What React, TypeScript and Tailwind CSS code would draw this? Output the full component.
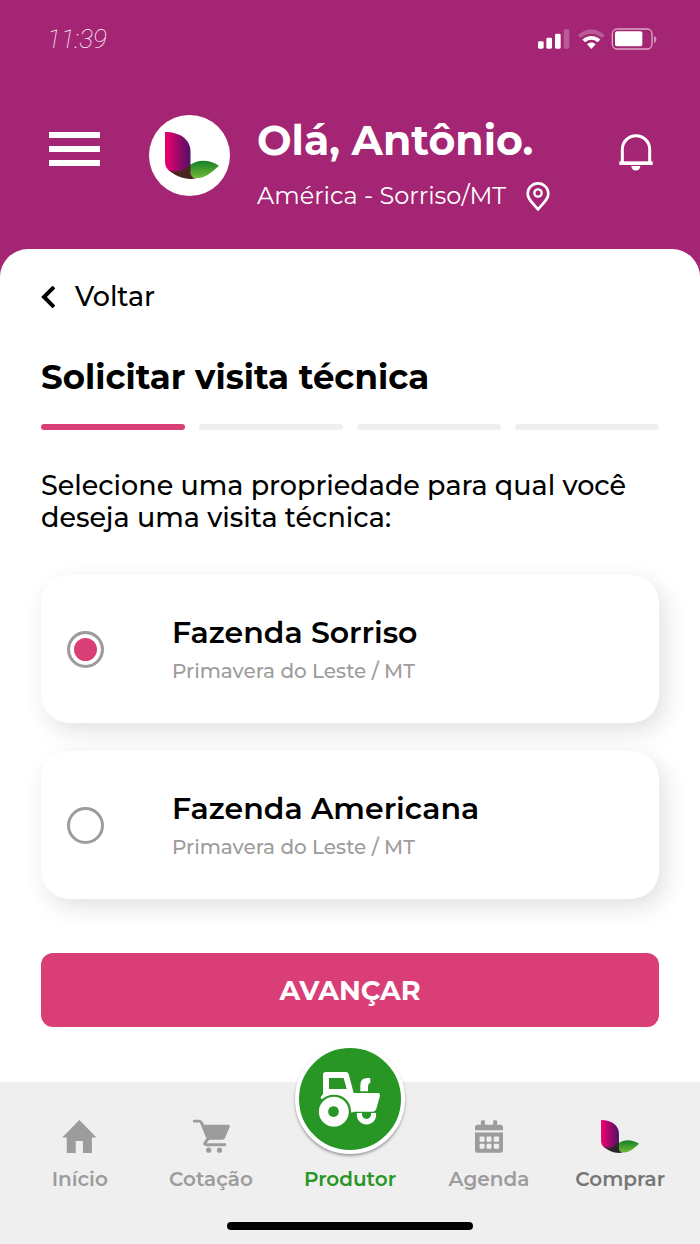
import React, { useState } from 'react';

type Farm = { id: string; name: string; place: string };

const FARMS: Farm[] = [
  { id: 'sorriso', name: 'Fazenda Sorriso', place: 'Primavera do Leste / MT' },
  { id: 'americana', name: 'Fazenda Americana', place: 'Primavera do Leste / MT' },
];

const STEPS = 4;

function StatusIcons() {
  return (
    <svg viewBox="37 38 360 66" className="h-[22px] w-[120px]" fill="white" aria-hidden="true">
      <rect x="40" y="78" width="17" height="22" rx="4" />
      <rect x="65" y="67" width="17" height="33" rx="4" />
      <rect x="91" y="55" width="17" height="45" rx="4" />
      <rect x="117" y="42" width="17" height="58" rx="4" opacity="0.25" />
      <path d="M160 60 C182 37 217 37 240 60 L232 68 C214 51 186 51 168 68z" opacity="0.25" />
      <path d="M173 73 C188 58 212 58 227 73 L218 81 C208 71 192 71 182 81z" />
      <path d="M187 87 C194 80 206 80 213 87 L200 101z" />
      <rect x="263" y="41" width="119" height="60" rx="14" fill="none" stroke="white" strokeWidth="4" opacity="0.6" />
      <rect x="271" y="48" width="82" height="45" rx="6" />
      <path d="M388 61 Q395 64 395 72 Q395 80 388 83z" opacity="0.5" />
    </svg>
  );
}

function Logo({ id, className, overlap }: { id: string; className: string; overlap: string }) {
  return (
    <svg viewBox="75 83 163 142" className={className} aria-hidden="true">
      <defs>
        <linearGradient id={`${id}-petal`} x1="0" y1="0" x2="1" y2="0">
          <stop offset="0.1" stopColor="#e2006d" />
          <stop offset="1" stopColor="#4d1265" />
        </linearGradient>
        <linearGradient id={`${id}-leaf`} x1="0" y1="0" x2="0" y2="1">
          <stop offset="0.1" stopColor="#1f8428" />
          <stop offset="1" stopColor="#72bd36" />
        </linearGradient>
      </defs>
      <path d="M75 83 C121 83 152 106 152 143 V186 L120 205 H95 C82 198 75 188 75 172z" fill={`url(#${id}-petal)`} />
      <path d="M150 183 C176 164 211 167 238 185 C212 208 196 223 168 223 C155 219 150 212 150 200z" fill={`url(#${id}-leaf)`} />
      <path d="M87 197 C98 203 111 204 122 200 C133 196 140 187 152 181 V205 C152 214 158 221 169 223 C141 229 107 219 87 197z" fill={overlap} />
    </svg>
  );
}

function BellIcon() {
  return (
    <svg viewBox="806 402 102 111" className="h-[37px] w-[34px]" aria-hidden="true">
      <path d="M816 487 V448 a41 41 0 0 1 82 0 V487" fill="none" stroke="white" strokeWidth="9" />
      <rect x="807" y="484" width="100" height="11" fill="white" />
      <path d="M843 498 H870 A13 13 0 0 1 843 498z" fill="white" />
    </svg>
  );
}

function PinIcon() {
  return (
    <svg viewBox="527 540 72 87" className="h-[29px] w-6" fill="none" stroke="white" aria-hidden="true">
      <path d="M563 622 C546 602 532 591 532 575 a31 31 0 0 1 62 0 C594 591 580 602 563 622z" strokeWidth="8" />
      <circle cx="563" cy="573" r="11" strokeWidth="7" />
    </svg>
  );
}

function HomeIcon() {
  return (
    <svg viewBox="185 117 105 100" className="h-[33px] w-[35px]" fill="currentColor" aria-hidden="true">
      <path d="M237 117 L289 170 H275 V217 H248 V181 H226 V217 H199 V170 H185z" />
    </svg>
  );
}

function CartIcon() {
  return (
    <svg viewBox="573 115 113 103" className="h-[34px] w-[37px]" fill="currentColor" aria-hidden="true">
      <path d="M577 121 H592 Q597 121 599 126 L619 175 L610 187 Q607 193 614 193 H670" fill="none" stroke="currentColor" strokeWidth="9" strokeLinecap="round" strokeLinejoin="round" />
      <path d="M600 132 H680 Q687 132 685 139 L671 172 Q669 178 663 178 H618z" />
      <circle cx="621" cy="210" r="8" />
      <circle cx="654" cy="210" r="8" />
    </svg>
  );
}

function CalendarIcon() {
  return (
    <svg viewBox="165 118 85 98" className="h-[33px] w-7" fill="currentColor" aria-hidden="true">
      <path d="M165 148 V139 Q165 131 173 131 H183 V122 Q183 118 187 118 H191 Q195 118 195 122 V131 H220 V122 Q220 118 224 118 H228 Q232 118 232 122 V131 H242 Q250 131 250 139 V148z" />
      <path
        fillRule="evenodd"
        d="M165 155 H250 V208 Q250 216 242 216 H173 Q165 216 165 208z M182 167 q-3 0 -3 3 v10 q0 3 3 3 h9 q3 0 3 -3 v-10 q0 -3 -3 -3z M203 167 q-3 0 -3 3 v10 q0 3 3 3 h9 q3 0 3 -3 v-10 q0 -3 -3 -3z M225 167 q-3 0 -3 3 v10 q0 3 3 3 h10 q3 0 3 -3 v-10 q0 -3 -3 -3z M182 189 q-3 0 -3 3 v9 q0 3 3 3 h9 q3 0 3 -3 v-9 q0 -3 -3 -3z M203 189 q-3 0 -3 3 v9 q0 3 3 3 h9 q3 0 3 -3 v-9 q0 -3 -3 -3z M225 189 q-3 0 -3 3 v9 q0 3 3 3 h10 q3 0 3 -3 v-9 q0 -3 -3 -3z"
      />
    </svg>
  );
}

function TractorIcon() {
  return (
    <svg viewBox="110 115 201 180" className="h-[60px] w-[67px]" fill="white" aria-hidden="true">
      <path
        fillRule="evenodd"
        d="M131 191 V132 Q131 124 139 124 H200 Q206 124 208 130 L223 187 H297 Q303 188 302 195 L291 234 Q288 243 279 243 H223 L216 246 C215 213 195 192 163 192 C149 192 138 197 127 206 Q121 201 126 196z M149 142 V175 H202 L193 142z"
      />
      <path fillRule="evenodd" d="M163 198 a45 45 0 1 0 1 0z M163 227 a16 16 0 1 1 -1 0z" />
      <path d="M233 247 H248 A14 14 0 1 0 275 247 H290 A29 29 0 1 1 233 247z" />
      <path d="M243 182 V164 Q243 142 264 142 H270 Q273 142 273 146 V156 Q266 158 266 167 V182z" />
    </svg>
  );
}

function FarmCard({ farm, checked, onSelect }: { farm: Farm; checked: boolean; onSelect: () => void }) {
  return (
    <label
      htmlFor={farm.id}
      className="flex cursor-pointer items-center gap-[68px] rounded-[28px] bg-white py-[38px] pr-6 pl-[26px] shadow-[6px_8px_24px_rgba(0,0,0,0.12)]"
    >
      <input
        type="radio"
        id={farm.id}
        name="farm"
        checked={checked}
        onChange={onSelect}
        className="size-[37px] shrink-0 appearance-none rounded-full border-[3px] border-[#9c9c9c] bg-white bg-clip-padding checked:bg-[#da3e77] checked:shadow-[inset_0_0_0_4px_white]"
      />
      <span className="flex flex-col gap-1">
        <span className="text-[30px] leading-10 font-semibold text-black">{farm.name}</span>
        <span className="text-[20px] leading-7 font-medium text-[#9c9c9c]">{farm.place}</span>
      </span>
    </label>
  );
}

function NavItem({ icon, label, className }: { icon: React.ReactNode; label: string; className: string }) {
  return (
    <a href="#" className={`flex flex-col items-center gap-[11px] ${className}`}>
      <span className="flex h-10 items-center">{icon}</span>
      <span className="text-[20px] leading-6 font-semibold">{label}</span>
    </a>
  );
}

export default function App() {
  const [selected, setSelected] = useState('sorriso');

  return (
    <div className="flex min-h-screen flex-col bg-[#a42573] font-[Montserrat,Inter,sans-serif]">
      <header className="pt-5 text-white">
        <div className="flex h-[38px] items-center justify-between pr-[43px] pl-[47px]">
          <time className="font-[Roboto,sans-serif] text-[26px] font-thin italic">11:39</time>
          <StatusIcons />
        </div>

        <div className="mt-[57px] flex items-start pr-[47px] pl-[49px]">
          <button type="button" aria-label="Menu" className="mt-[17px] flex w-[51px] flex-col gap-2">
            <span className="h-[6px] w-full bg-white" />
            <span className="h-[6px] w-full bg-white" />
            <span className="h-[6px] w-full bg-white" />
          </button>
          <div className="ml-[49px] flex size-[81px] shrink-0 items-center justify-center rounded-full bg-white pl-1">
            <Logo id="avatar" className="h-[47px] w-[54px]" overlap="#4a2520" />
          </div>
          <div className="ml-[27px] flex-1">
            <h1 className="text-[41px] leading-[50px] font-bold">Olá, Antônio.</h1>
            <div className="mt-[15px] flex items-center gap-5">
              <p className="text-[24px] leading-8">América - Sorriso/MT</p>
              <PinIcon />
            </div>
          </div>
          <button type="button" aria-label="Notificações" className="mt-[19px]">
            <BellIcon />
          </button>
        </div>
      </header>

      <main className="mt-[37px] flex-1 rounded-t-[28px] bg-white px-[41px] pt-8 pb-[55px] text-black">
        <a href="#" className="flex items-center gap-5 text-[27px] leading-8 font-medium">
          <svg viewBox="0 0 14 22" className="h-[22px] w-[14px]" fill="none" stroke="currentColor" strokeWidth="4" aria-hidden="true">
            <path d="M13 1 L3 11 L13 21" />
          </svg>
          Voltar
        </a>

        <h2 className="mt-11 text-[34px] leading-10 font-bold">Solicitar visita técnica</h2>

        <div className="mt-[27px] grid grid-cols-4 gap-[14px]">
          {Array.from({ length: STEPS }, (_, i) => (
            <div key={i} className={`h-[6px] rounded-full ${i === 0 ? 'bg-[#da3e77]' : 'bg-[#efefef]'}`} />
          ))}
        </div>

        <p className="mt-10 text-[27px] leading-8 font-medium">Selecione uma propriedade para qual você deseja uma visita técnica:</p>

        <div className="mt-[41px] flex flex-col gap-7">
          {FARMS.map((farm) => (
            <FarmCard key={farm.id} farm={farm} checked={selected === farm.id} onSelect={() => setSelected(farm.id)} />
          ))}
        </div>

        <button type="button" className="mt-[54px] h-[74px] w-full rounded-xl bg-[#da3e77] pt-[2px] text-[27px] font-bold text-white">
          AVANÇAR
        </button>
      </main>

      <nav className="relative bg-[#efefef] px-[18px] pt-[34px] pb-[14px]">
        <div className="grid grid-cols-[8fr_9fr_9fr_9fr_8fr]">
          <NavItem icon={<HomeIcon />} label="Início" className="text-[#9c9c9c]" />
          <NavItem icon={<CartIcon />} label="Cotação" className="text-[#9c9c9c]" />
          <NavItem
            icon={
              <span className="absolute -top-[38px] flex size-[110px] -translate-x-1/2 items-center justify-center rounded-full border-4 border-white bg-[#279624] shadow-[0_2px_3px_rgba(0,0,0,0.35)]">
                <TractorIcon />
              </span>
            }
            label="Produtor"
            className="text-[#279624]"
          />
          <NavItem icon={<CalendarIcon />} label="Agenda" className="text-[#9c9c9c]" />
          <NavItem icon={<Logo id="shop" className="h-[33px] w-[38px]" overlap="#2b2729" />} label="Comprar" className="text-[#767676]" />
        </div>
        <div className="mx-auto mt-[31px] h-2 w-[246px] rounded-full bg-black" />
      </nav>
    </div>
  );
}
